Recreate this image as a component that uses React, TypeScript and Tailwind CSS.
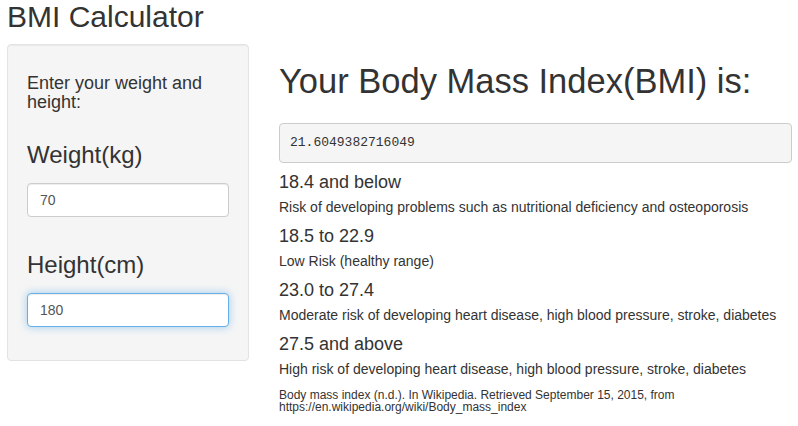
import React from "react";

const ranges = [
  { h: "18.4 and below", t: "Risk of developing problems such as nutritional deficiency and osteoporosis" },
  { h: "18.5 to 22.9", t: "Low Risk (healthy range)" },
  { h: "23.0 to 27.4", t: "Moderate risk of developing heart disease, high blood pressure, stroke, diabetes" },
  { h: "27.5 and above", t: "High risk of developing heart disease, high blood pressure, stroke, diabetes" },
];

export default function App() {
  return (
    <div className="w-[798px] h-[426px] overflow-hidden bg-white text-[#333] font-['Liberation_Sans',Arial,sans-serif] pl-[7px]">
      <h2 className="text-[30px] leading-[33px] font-normal">BMI Calculator</h2>
      <div className="flex items-start mt-[11px] gap-[30px]">
        <div className="w-[242px] shrink-0 bg-[#f5f5f5] border border-[#e3e3e3] rounded-[4px] shadow-[inset_0_1px_1px_rgba(0,0,0,0.05)] px-[19px] pt-[29px] pb-[33px]">
          <h4 className="text-[18px] leading-[19px] font-normal">Enter your weight and height:</h4>
          <label className="block mt-[30px] text-[24px] leading-[26px] font-normal">Weight(kg)</label>
          <input
            type="text"
            readOnly
            value="70"
            className="block mt-[15px] w-full h-[34px] px-[12px] bg-white border border-[#ccc] rounded-[4px] text-[14px] text-[#555] shadow-[inset_0_1px_1px_rgba(0,0,0,0.075)] outline-none"
          />
          <label className="block mt-[35px] text-[24px] leading-[26px] font-normal">Height(cm)</label>
          <input
            type="text"
            readOnly
            value="180"
            className="block mt-[15px] w-full h-[34px] px-[12px] bg-white border border-[#66afe9] rounded-[4px] text-[14px] text-[#555] shadow-[inset_0_1px_1px_rgba(0,0,0,0.075),0_0_8px_rgba(102,175,233,0.6)] outline-none"
          />
        </div>
        <div className="w-[513px] shrink-0">
          <h1 className="mt-[18px] text-[34.5px] leading-[38px] font-normal whitespace-nowrap">Your Body Mass Index(BMI) is:</h1>
          <pre className="mt-[23px] bg-[#f5f5f5] border border-[#ccc] rounded-[4px] px-[10px] py-[9.5px] text-[13px] leading-[18.5px] text-[#333] font-['Liberation_Mono','Courier_New',monospace]">21.6049382716049</pre>
          <div className="mt-[9px]">
            {ranges.map((r, i) => (
              <div key={i} className={i === 0 ? "" : "mt-[11px]"}>
                <h4 className="text-[18px] leading-[20px] font-normal">{r.h}</h4>
                <h5 className="mt-[8px] text-[14px] leading-[15px] font-normal whitespace-nowrap">{r.t}</h5>
              </div>
            ))}
          </div>
          <h6 className="mt-[12px] text-[12px] leading-[12.5px] font-normal">
            Body mass index (n.d.). In Wikipedia. Retrieved September 15, 2015, from https://en.wikipedia.org/wiki/Body_mass_index
          </h6>
        </div>
      </div>
    </div>
  );
}
